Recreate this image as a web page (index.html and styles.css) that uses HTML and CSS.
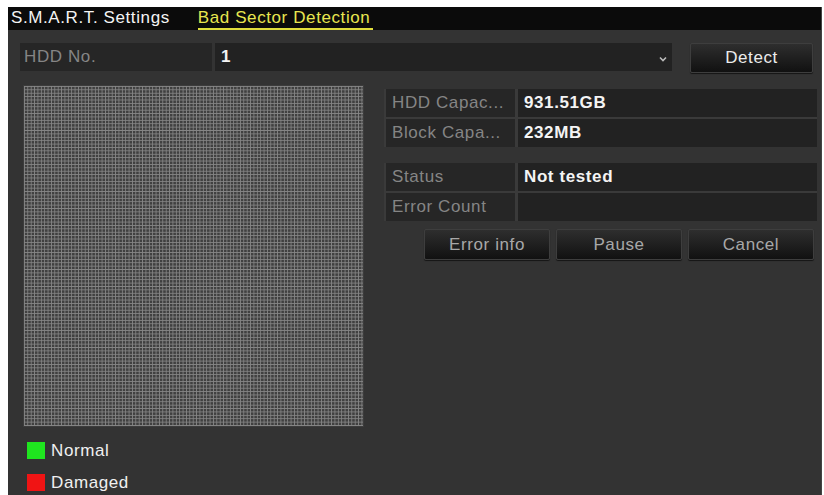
FILE: index.html
```html
<!DOCTYPE html>
<html>
<head>
<meta charset="utf-8">
<link rel="stylesheet" href="styles.css">
</head>
<body>
<div class="window">
  <div class="tabs">
    <div class="tab">S.M.A.R.T. Settings</div>
    <div class="tab active">Bad Sector Detection</div>
  </div>
  <div class="content">
    <div class="top-row">
      <div class="cell label wide">HDD No.</div>
      <div class="cell value select">
        <span>1</span>
        <svg class="arrow" width="8" height="6" viewBox="0 0 8 6"><path d="M1 1.5 L4 4.5 L7 1.5" fill="none" stroke="#bbb" stroke-width="1.6"/></svg>
      </div>
      <div class="btn detect">Detect</div>
    </div>
    <div class="main">
      <div class="left">
        <div class="grid"></div>
        <div class="legend">
          <div class="legend-item"><span class="swatch green"></span>Normal</div>
          <div class="legend-item"><span class="swatch red"></span>Damaged</div>
        </div>
      </div>
      <div class="right">
        <div class="table">
          <div class="trow"><div class="cell label">HDD Capac...</div><div class="cell value strong">931.51GB</div></div>
          <div class="trow"><div class="cell label">Block Capa...</div><div class="cell value strong">232MB</div></div>
        </div>
        <div class="table second">
          <div class="trow"><div class="cell label">Status</div><div class="cell value strong">Not tested</div></div>
          <div class="trow"><div class="cell label">Error Count</div><div class="cell value strong"></div></div>
        </div>
        <div class="buttons">
          <div class="btn action">Error info</div>
          <div class="btn action">Pause</div>
          <div class="btn action">Cancel</div>
        </div>
      </div>
    </div>
  </div>
</div>
</body>
</html>
```

FILE: styles.css
```css
html, body {
  margin: 0;
  padding: 0;
  background: #ffffff;
}
body {
  font-family: "Liberation Sans", Arial, sans-serif;
  font-size: 17px;
  letter-spacing: 0.6px;
  overflow: hidden;
}
.window {
  margin: 7px 0 0 8px;
  width: 814px;
  height: 488px;
  background: #333333;
  box-sizing: border-box;
  border-right: 1px solid #444;
}
.tabs {
  height: 23px;
  background: #0b0b0b;
  display: flex;
  align-items: stretch;
  padding-left: 3px;
  gap: 28px;
}
.tab {
  color: #f4f4f4;
  line-height: 21px;
  box-sizing: border-box;
}
.tab.active {
  color: #e8e650;
  border-bottom: 2px solid #e0de3c;
  padding-right: 3px;
}
.content {
  padding: 13px 0 0 12px;
}
.top-row {
  display: flex;
  align-items: flex-start;
}
.cell {
  height: 28px;
  display: flex;
  align-items: center;
  box-sizing: border-box;
  padding-left: 6px;
  white-space: nowrap;
  overflow: hidden;
}
.label {
  background: #262626;
  color: #858585;
}
.value {
  background: #222222;
  color: #f4f4f4;
}
.wide {
  width: 192px;
  margin-right: 3px;
  padding-left: 4px;
}
.select {
  width: 457px;
  justify-content: space-between;
  padding-right: 5px;
  margin-right: 18px;
  font-weight: bold;
}
.arrow {
  margin-top: 3px;
}
.btn {
  display: flex;
  align-items: center;
  justify-content: center;
  box-sizing: border-box;
  background: linear-gradient(#2e2e2e, #111111);
  border: 1px solid #3e3e3e;
  border-radius: 2px;
  box-shadow: 0 1px 1px rgba(0,0,0,0.6);
}
.detect {
  width: 123px;
  height: 30px;
  color: #ececec;
}
.main {
  display: flex;
  margin-top: 13px;
  gap: 21px;
}
.left {
  margin-left: 4px;
  display: flex;
  flex-direction: column;
}
.grid {
  width: 339px;
  height: 340px;
  background-color: #404040;
  background-image:
    linear-gradient(to right, #858585 1px, transparent 1px),
    linear-gradient(to bottom, #858585 1px, transparent 1px);
  background-size: 3.39px 3.4px;
  box-shadow: 0 0 0 1px #3c3c3c;
}
.legend {
  margin-top: 16px;
  margin-left: 3px;
  display: flex;
  flex-direction: column;
  gap: 15px;
}
.legend-item {
  display: flex;
  align-items: center;
  gap: 6px;
  height: 17px;
  color: #f0f0f0;
}
.swatch {
  width: 18px;
  height: 17px;
  display: block;
}
.green { background: #1fe51f; }
.red { background: #f01414; }
.right {
  margin-top: 3px;
  width: 433px;
  display: flex;
  flex-direction: column;
}
.table {
  display: flex;
  flex-direction: column;
  gap: 2px;
  background: #3a3a3a;
  padding: 0 0 0 2px;
}
.table.second {
  margin-top: 16px;
}
.trow {
  display: flex;
  gap: 3px;
}
.trow .label {
  width: 129px;
  padding-left: 6px;
}
.trow .value {
  width: 299px;
}
.strong {
  font-weight: bold;
}
.buttons {
  display: flex;
  justify-content: flex-end;
  gap: 6px;
  margin-top: 8px;
  padding-right: 3px;
}
.action {
  width: 126px;
  height: 31px;
  color: #a8a8a8;
}
```
